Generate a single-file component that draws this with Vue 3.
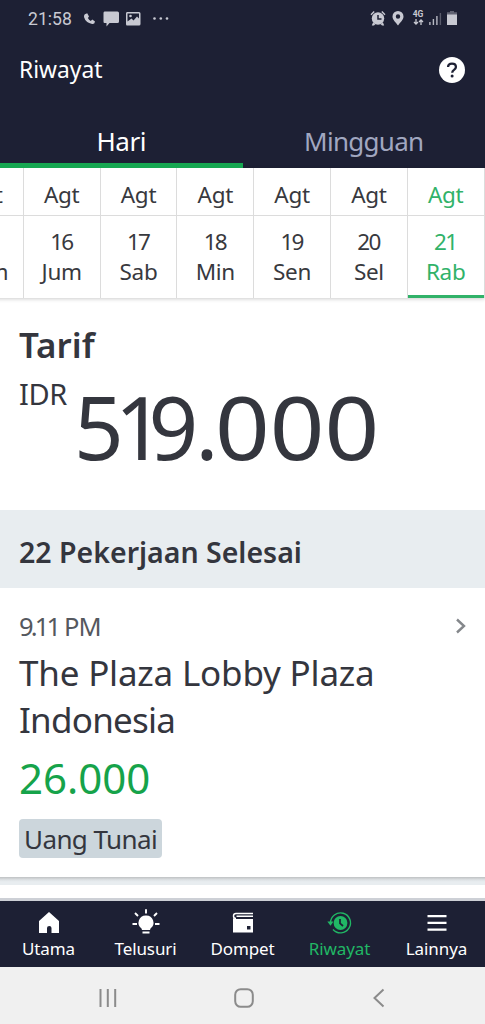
<script setup>
const days = [
  { date: '15', name: 'Kam' },
  { date: '16', name: 'Jum' },
  { date: '17', name: 'Sab' },
  { date: '18', name: 'Min' },
  { date: '19', name: 'Sen' },
  { date: '20', name: 'Sel' },
  { date: '21', name: 'Rab', active: true },
]
const signal = [3, 6, 9, 12]
</script>

<template>
  <div class="screen">
    <header class="header">
      <div class="status">
        <span class="clock">21:58</span>
        <svg class="left-icons" width="90" height="20" viewBox="0 0 90 20">
          <path d="M1.8 5.2 L4.2 4.3 L6 7.5 L4.9 9 Q5.8 11 7.8 12 L9.3 10.6 L12 12.4 Q11.6 15.3 9.2 15 Q2.5 13.6 1 8 Q.8 6.2 1.8 5.2Z" />
          <path d="M21.5 2.5H34.5Q36 2.500 36 4V12.500Q36 14 34.500 14H26.500L23.500 17.500V14H21.500Q20.500 14 20.500 12.500V4Q20.500 2.500 21.500 2.500Z" />
          <path fill-rule="evenodd" d="M44 3H56Q57.500 3 57.500 4.500V15Q57.500 16.500 56 16.500H44Q43 16.500 43 15V4.500Q43 3 44 3ZM44.500 4.500V12.500L48.500 9.500L50.500 11.500L54 7.500L56 9.500V4.500Z" />
          <circle cx="47.500" cy="7" r="1.300" />
          <circle cx="71.500" cy="9.500" r="1.300" /><circle cx="77.800" cy="9.500" r="1.300" /><circle cx="84" cy="9.500" r="1.300" />
        </svg>
        <div class="right-icons">
          <svg width="16" height="17" viewBox="0 0 16 17">
            <circle cx="8" cy="8.500" r="6.200" />
            <path d="M3 12.500L1.800 15.500H4L5.500 14M13 12.500L14.200 15.500H12L10.500 14" />
            <path d="M1 4.800L4.200 1.600M15 4.800L11.800 1.600" fill="none" stroke="#c8c9d2" stroke-width="1.400" />
            <path d="M8 5V9H11.500" fill="none" stroke="#1d2034" stroke-width="1.500" />
          </svg>
          <svg class="pin" width="12" height="17" viewBox="0 0 12 17">
            <path fill-rule="evenodd" d="M6 1A5.500 5.500 0 0 1 11.500 6.500C11.500 10 8 12.500 6 15.500C4 12.500.5 10 .5 6.500A5.500 5.500 0 0 1 6 1ZM6 4.300A2.200 2.200 0 1 0 6 8.700A2.200 2.200 0 1 0 6 4.300Z" />
          </svg>
          <div class="network">
            <span>4G</span>
            <svg width="11" height="6" viewBox="0 0 11 6"><path d="M3 0V5M1 3L3 5L5 3M8 6V1M6 3L8 1L10 3" fill="none" stroke="#c8c9d2" stroke-width="1.300" /></svg>
          </div>
          <svg class="signal" width="13" height="16" viewBox="0 0 13 16">
            <rect v-for="(h, i) in signal" :key="h" :x="i * 3.5 + 0.2" :y="15 - h" width="1.400" :height="h" :opacity="i === 3 ? 0.35 : 0.9" />
          </svg>
          <svg class="battery" width="10" height="16" viewBox="0 0 10 16">
            <path d="M3 1H7V2.300H10V5H0V2.300H3Z" opacity=".4" /><path d="M0 4.500H10V15H0Z" />
          </svg>
        </div>
      </div>
      <div class="title-row">
        <h1>Riwayat</h1>
        <svg class="help" width="26" height="26" viewBox="0 0 26 26">
          <circle cx="13" cy="13" r="13" fill="#fff" />
          <path d="M9.100 10.100Q9.100 6.700 13 6.700Q16.900 6.700 16.900 9.900Q16.900 11.500 15 12.900Q13.200 14.100 13.200 15.700" fill="none" stroke="#1d2034" stroke-width="2.300" />
          <circle cx="13.100" cy="19" r="1.500" fill="#1d2034" />
        </svg>
      </div>
      <nav class="tabs">
        <div class="tab on"><span class="hari">Hari</span></div>
        <div class="tab"><span class="mingguan">Mingguan</span></div>
      </nav>
    </header>

    <section class="calendar">
      <div v-for="d in days" :key="d.date" class="day" :class="{ active: d.active }">
        <div class="month">Agt</div>
        <div class="date"><span class="number">{{ d.date }}</span><span>{{ d.name }}</span></div>
      </div>
    </section>

    <section class="fare">
      <h2>Tarif</h2>
      <div class="total">
        <span class="currency">IDR</span>
        <span class="amount"><span class="five">5</span><span class="one">1</span><span class="nine">9</span><span class="dot">.</span><span class="zeros">000</span></span>
      </div>
    </section>

    <div class="summary"><span>22 Pekerjaan Selesai</span></div>

    <article class="job">
      <div class="time-row">
        <span class="time"><span class="clock-digits">9.11</span> PM</span>
        <svg width="12" height="18" viewBox="0 0 12 18"><path d="M2 2.500L9 9L2 15.500" fill="none" stroke="#84878b" stroke-width="2.400" /></svg>
      </div>
      <div class="place">The Plaza Lobby Plaza<br><span class="country">Indonesia</span></div>
      <div class="price">26.000</div>
      <span class="chip"><span>Uang Tunai</span></span>
    </article>
    <div class="gap"></div>
    <div class="next-job"></div>

    <nav class="bottom">
      <div class="item utama">
        <svg width="28" height="26" viewBox="0 0 28 26"><path d="M14 3L24 12V24H16.500V19Q16.500 17 14.300 17Q12 17 12 19V24H4V12Z" /></svg>
        <span>Utama</span>
      </div>
      <div class="item telusuri">
        <svg width="28" height="26" viewBox="0 0 28 26">
          <path d="M14 6.500A7.200 7.200 0 0 1 18.500 19.500L18 21H10L9.500 19.500A7.200 7.200 0 0 1 14 6.500ZM10.500 22.500H17.500V24.500H10.500Z" />
          <path d="M14 .2V4.500M3 4L6 7M25 4L22 7M.5 15H5M23 15H27.500" fill="none" stroke="#fff" stroke-width="1.900" />
        </svg>
        <span>Telusuri</span>
      </div>
      <div class="item dompet">
        <svg width="28" height="26" viewBox="0 0 28 26">
          <path fill-rule="evenodd" d="M4 9Q5 10 7 10H24V23.500H4ZM18 17V20.500H21.500V17Z" />
          <path d="M24 4.500H7Q4.500 4.500 4.500 7Q4.500 9.500 7 9.500M24 7.200H7.500" fill="none" stroke="#fff" stroke-width="1.400" />
        </svg>
        <span>Dompet</span>
      </div>
      <div class="item riwayat">
        <svg width="28" height="26" viewBox="0 0 28 26">
          <circle cx="14.500" cy="14" r="6.900" fill="#21b765" />
          <path d="M4.500 14A10 10 0 1 1 7 20.500" fill="none" stroke="#21b765" stroke-width="1.400" />
          <path d="M1.300 12.500H7.500L4.500 16.700Z" fill="#21b765" />
          <path d="M14 10V14.300L17 17" fill="none" stroke="#1d2034" stroke-width="1.700" />
        </svg>
        <span>Riwayat</span>
      </div>
      <div class="item lainnya">
        <svg width="28" height="26" viewBox="0 0 28 26"><path d="M4.500 6H23.500V8.200H4.500ZM4.500 12.800H23.500V15H4.500ZM4.500 19.600H23.500V21.800H4.500Z" /></svg>
        <span>Lainnya</span>
      </div>
    </nav>

    <div class="system">
      <svg width="22" height="22" viewBox="0 0 22 22"><path d="M3.500 2V20M10.800 2V20M18.200 2V20" /></svg>
      <svg width="22" height="22" viewBox="0 0 22 22"><rect x="2.200" y="2.200" width="17.600" height="17.600" rx="5.500" /></svg>
      <svg width="22" height="22" viewBox="0 0 22 22"><path d="M15.500 2.500L6.500 11L15.500 19.500" /></svg>
    </div>
  </div>
</template>

<style>
body { margin: 0; }
</style>

<style scoped>
.screen {
  width: 485px;
  height: 1024px;
  overflow: hidden;
  background: #fff;
  color: #34363e;
  font-family: "Noto Sans", "Open Sans", sans-serif;
  white-space: nowrap;
}
.header { height: 168px; background: #1d2034; color: #fff; }
.status { display: flex; align-items: flex-start; height: 38px; padding: 9px 28px 0 28px; box-sizing: border-box; color: #c8c9d2; }
.status svg { fill: #c8c9d2; flex: none; }
.clock { font: 17.600px/20px Roboto, sans-serif; width: 56px; }
.left-icons { margin-left: -1px; }
.right-icons { display: flex; margin-left: auto; padding-top: 1px; }
.pin { margin-left: 6px; }
.network { display: flex; flex-direction: column; align-items: center; width: 12px; margin-left: 8px; font: bold 8.500px/9px Roboto, sans-serif; }
.signal { margin-left: 5px; }
.battery { margin-left: 5px; }
.title-row { display: flex; justify-content: space-between; align-items: center; height: 64px; padding: 0 20px 0 19px; }
h1 { margin: 0; font-size: 22.800px; font-weight: 400; line-height: 32px; }
.tabs { display: flex; height: 66px; }
.tab { width: 50%; box-sizing: border-box; padding-top: 19px; text-align: center; font-size: 26px; line-height: 40px; color: #a1a7c0; }
.tab.on { color: #fff; border-bottom: 5px solid #16a751; }
.hari { letter-spacing: -.4px; }
.mingguan { letter-spacing: -.7px; }
.calendar { display: flex; width: 538px; height: 130px; margin-left: -53px; background: #fff; box-shadow: 0 1px 4px rgba(0, 0, 0, .2); }
.day { flex: none; width: 76.800px; box-sizing: border-box; border-right: 1px solid #dcdcdc; text-align: center; font-size: 22.500px; letter-spacing: -.3px; color: #38393e; }
.month { height: 47px; line-height: 53px; border-bottom: 1px solid #dcdcdc; }
.date { display: flex; flex-direction: column; height: 82px; padding-top: 11px; box-sizing: border-box; line-height: 30px; }
.number { letter-spacing: -1.800px; padding-right: 1px; }
.active { color: #31b269; }
.active .date { border-bottom: 3px solid #31b269; }
.fare { height: 212px; padding: 22px 19px 0; box-sizing: border-box; }
h2 { margin: 0; font-size: 35px; line-height: 49px; font-weight: 600; height: 50px; }
.total { display: flex; align-items: flex-start; }
.currency { width: 55px; font-size: 29px; line-height: 48px; letter-spacing: -.4px; }
.amount { font-size: 87px; line-height: 112px; }
.five { letter-spacing: -9px; }
.one { letter-spacing: -16px; }
.nine { letter-spacing: -3px; }
.dot { letter-spacing: -3.400px; }
.zeros { display: inline-block; transform: scaleX(1.1); transform-origin: left; }
.summary { height: 78px; background: #e8edf0; padding: 0 19px; font-size: 28.500px; line-height: 85px; font-weight: 600; }
.job { display: flex; flex-direction: column; height: 289px; padding: 17px 18px 0 19px; box-sizing: border-box; }
.time-row { display: flex; justify-content: space-between; align-items: center; height: 44px; color: #55585e; }
.time-row svg { margin-bottom: 3px; }
.time { font-size: 25.500px; line-height: 42px; height: 44px; letter-spacing: -1px; }
.clock-digits { letter-spacing: -2.800px; }
.place { font-size: 35px; line-height: 47px; letter-spacing: -.2px; }
.country { letter-spacing: -.75px; }
.price { font-size: 42px; line-height: 69px; color: #16a34a; }
.chip { align-self: flex-start; height: 39px; width: 142.500px; margin-top: 7px; box-sizing: border-box; padding-left: 5px; border-radius: 4px; background: #ccd6dc; font-size: 26px; line-height: 40px; letter-spacing: -.6px; }
.gap { height: 8px; background: linear-gradient(#bfc1c3, #dde1e4 35%, #e8edf0 60%); }
.next-job { height: 16px; box-sizing: border-box; border-bottom: 3px solid #cdd0d6; }
.bottom { display: flex; height: 66px; background: #1d2034; color: #fff; }
.item { width: 97px; display: flex; flex-direction: column; align-items: center; padding-top: 8px; font-size: 17px; line-height: 28px; letter-spacing: -.1px; }
.item svg { fill: #fff; flex: none; }
.riwayat { color: #21b765; }
.system { display: flex; justify-content: space-between; align-items: center; height: 57px; box-sizing: border-box; padding: 4px 95px 0 97px; background: #f0f0f0; }
.system svg { fill: none; stroke: #8b8b8b; stroke-width: 2; }
</style>
